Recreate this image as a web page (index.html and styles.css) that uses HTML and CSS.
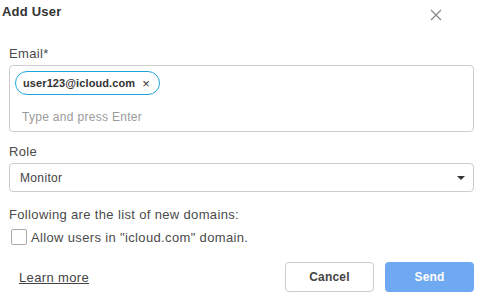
FILE: index.html
```html
<!DOCTYPE html>
<html lang="en">
<head>
    <meta charset="UTF-8">
    <meta name="viewport" content="width=device-width, initial-scale=1.0">
    <title>Add User</title>
    <link rel="stylesheet" href="styles.css">
</head>
<body>

    <div class="modal">
        <div class="modal-header">
            <h2>Add User</h2>
            <button class="close" type="button" aria-label="Close">
                <svg width="12" height="12" viewBox="0 0 12 12">
                    <path d="M1 1 L11 11 M11 1 L1 11" stroke="#8a8a8a" stroke-width="1.3" fill="none"/>
                </svg>
            </button>
        </div>

        <form class="modal-body">
            <label class="field-label">Email*</label>
            <div class="tag-input">
                <span class="tag">user123@icloud.com <span class="tag-remove">&times;</span></span>
                <input type="text" placeholder="Type and press Enter">
            </div>

            <label class="field-label">Role</label>
            <div class="select">
                <span>Monitor</span>
                <span class="caret"></span>
            </div>

            <p class="domains">Following are the list of new domains:</p>
            <div class="checkbox-group">
                <span class="checkbox"></span>
                <span>Allow users in "icloud.com" domain.</span>
            </div>

            <div class="modal-footer">
                <a href="#" class="learn">Learn more</a>
                <div class="buttons">
                    <button type="button" class="btn btn-cancel">Cancel</button>
                    <button type="button" class="btn btn-send">Send</button>
                </div>
            </div>
        </form>
    </div>

</body>
</html>
```

FILE: styles.css
```css
body {
    margin: 0;
    font-family: "Liberation Sans", Arial, sans-serif;
    color: #4a4a4a;
    background: #fff;
    letter-spacing: 0.35px;
}
.modal {
    width: 482px;
    height: 298px;
}
.modal-header {
    display: flex;
    justify-content: space-between;
    align-items: flex-start;
    padding: 4px 40px 0 2px;
}
.modal-header h2 {
    margin: 0;
    font-size: 13px;
    line-height: 16px;
    font-weight: 700;
    color: #333;
    letter-spacing: 0.2px;
}
.close {
    border: none;
    background: none;
    padding: 0;
    margin-top: 5px;
    width: 12px;
    height: 12px;
    display: flex;
}
.modal-body {
    padding: 25px 8px 0 9px;
}
.field-label {
    display: block;
    font-size: 13px;
    line-height: 16px;
    margin-bottom: 3px;
}
.tag-input {
    border: 1px solid #ccc;
    border-radius: 4px;
    height: 67px;
    box-sizing: border-box;
    padding: 5px 5px 0 5px;
    margin-bottom: 12px;
}
.tag {
    display: inline-flex;
    align-items: center;
    height: 24px;
    box-sizing: border-box;
    border: 1px solid #1fa6dd;
    border-radius: 12px;
    padding: 0 9px 0 7px;
    font-size: 11px;
    font-weight: 700;
    color: #333;
    gap: 7px;
    letter-spacing: 0.1px;
}
.tag-remove {
    font-weight: 400;
    font-size: 13px;
}
.tag-input input {
    display: block;
    border: none;
    outline: none;
    padding: 0;
    margin: 15px 0 0 7px;
    font-family: inherit;
    font-size: 12px;
    letter-spacing: 0.3px;
    color: #333;
}
.tag-input input::placeholder {
    color: #9a9a9a;
}
.select {
    display: flex;
    justify-content: space-between;
    align-items: center;
    border: 1px solid #ccc;
    border-radius: 4px;
    height: 29px;
    box-sizing: border-box;
    padding: 0 8px 0 10px;
    font-size: 12px;
    color: #444;
}
.caret {
    width: 0;
    height: 0;
    border-left: 4px solid transparent;
    border-right: 4px solid transparent;
    border-top: 4px solid #333;
}
.domains {
    margin: 15px 0 6px 0;
    font-size: 13px;
    line-height: 16px;
}
.checkbox-group {
    display: flex;
    align-items: center;
    gap: 4px;
    font-size: 13px;
    padding-left: 2px;
}
.checkbox {
    width: 16px;
    height: 16px;
    box-sizing: border-box;
    border: 1px solid #aaa;
    border-radius: 2px;
}
.modal-footer {
    display: flex;
    justify-content: space-between;
    align-items: center;
    margin-top: 17px;
}
.learn {
    color: #444;
    font-size: 13px;
    margin-left: 10px;
}
.buttons {
    display: flex;
    gap: 11px;
}
.btn {
    width: 89px;
    height: 30px;
    border-radius: 4px;
    font-family: inherit;
    font-size: 12px;
    font-weight: 700;
    letter-spacing: 0.2px;
    cursor: pointer;
}
.btn-cancel {
    background: #fff;
    border: 1px solid #ccc;
    color: #444;
}
.btn-send {
    background: #6ea9f1;
    border: none;
    color: #fff;
}
```
